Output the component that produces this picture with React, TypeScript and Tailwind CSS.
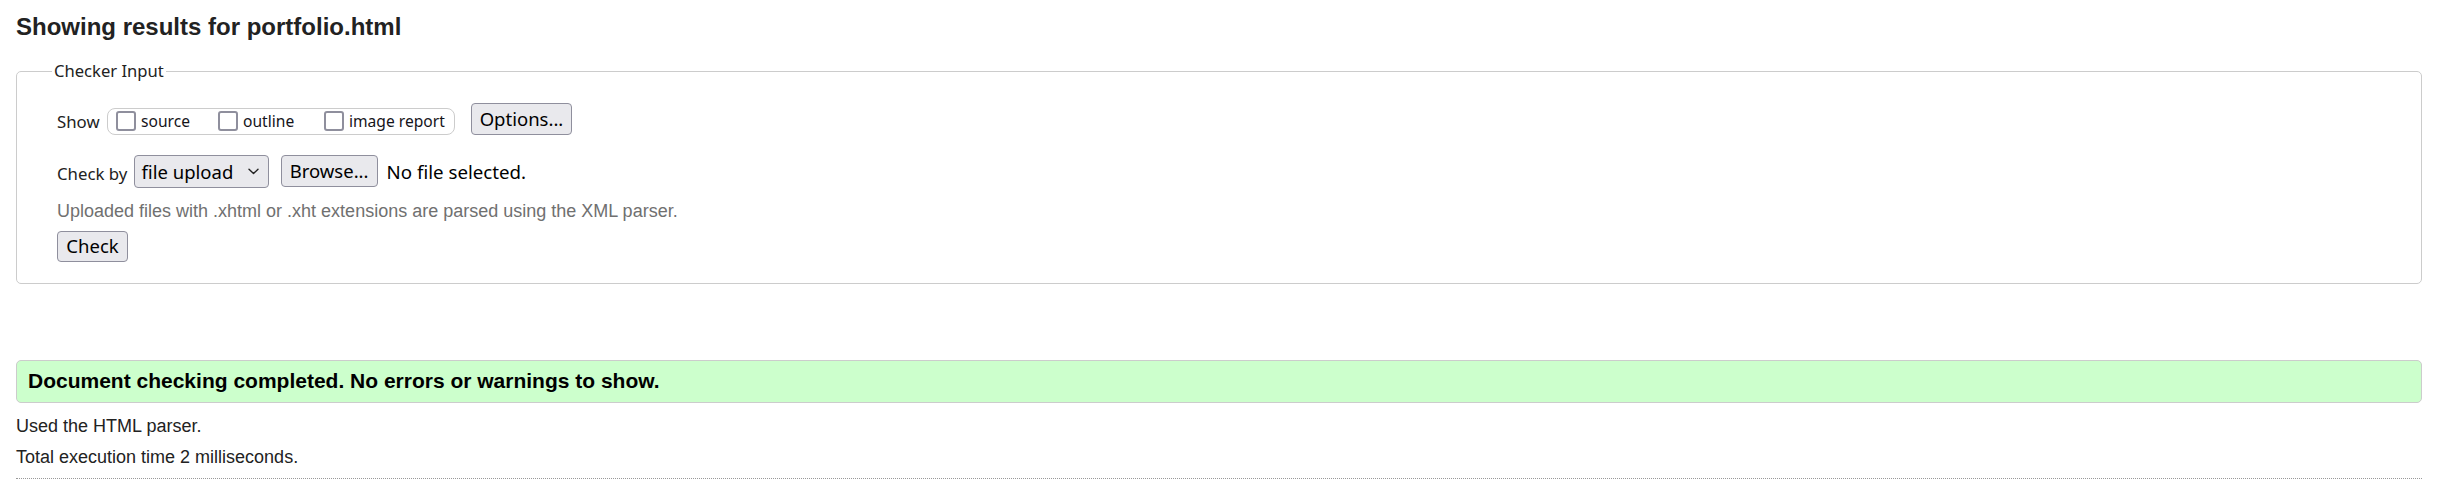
import React from "react";

function Box({ label, w }: { label: string; w: string }) {
  return (
    <label className="flex items-center gap-[5px]">
      <span className="block h-[20px] w-[20px] shrink-0 rounded-[3px] border-2 border-[#8f8f9d] bg-white" />
      <span className={`${w} whitespace-nowrap text-[15.6px] leading-[20px] text-[#15141a]`}>{label}</span>
    </label>
  );
}

export default function App() {
  return (
    <div className="min-h-[495px] bg-white pl-4 pr-8 font-['Liberation_Sans',Arial,sans-serif] text-[#222]">
      <h2 className="pt-[13px] text-[24px] font-bold leading-[28px] text-[#222]">
        Showing results for portfolio.html
      </h2>

      <fieldset className="mt-[18px] rounded-[5px] border border-[#cccccc] pb-[21px] pl-[40px] pt-[20px] font-['Noto_Sans',sans-serif]">
        <legend className="ml-[-5px] whitespace-nowrap px-[2px] text-[16.6px] leading-[24px] text-[#222]">
          Checker Input
        </legend>

        <div className="flex h-[33px] items-start">
          <span className="mt-[7px] w-[50px] shrink-0 text-[16.8px] leading-[24px] text-[#222]">Show</span>
          <div className="mt-[4.5px] flex h-[27px] w-[348px] shrink-0 items-center gap-[30px] rounded-[8px] border border-[#cccccc] pl-[8px]">
            <Box label="source" w="w-[47px]" />
            <Box label="outline" w="w-[51px]" />
            <Box label="image report" w="w-[95px]" />
          </div>
          <button className="ml-[16px] h-[32px] w-[101px] shrink-0 rounded-[4px] border border-[#8f8f9d] bg-[#e9e9ed] text-[18.5px] leading-[24px] text-black">
            Options...
          </button>
        </div>

        <div className="mt-[19px] flex h-[33px] items-start">
          <span className="mt-[7px] w-[76.6px] shrink-0 text-[16.8px] leading-[24px] text-[#222]">Check by</span>
          <div className="flex h-[33px] w-[135px] shrink-0 items-center justify-between rounded-[4px] border border-[#8f8f9d] bg-[#e9e9ed] pl-[7px] pr-[9px] text-[18.5px] leading-[24px] text-black">
            <span>file upload</span>
            <svg width="11" height="7" viewBox="0 0 11 7" fill="none">
              <path d="M1 1.2 L5.5 5.6 L10 1.2" stroke="#222" strokeWidth="1.4" strokeLinecap="round" strokeLinejoin="round" />
            </svg>
          </div>
          <button className="ml-[12px] h-[32px] w-[97px] shrink-0 rounded-[4px] border border-[#8f8f9d] bg-[#e9e9ed] text-[18.5px] leading-[24px] text-black">
            Browse...
          </button>
          <span className="ml-[9px] mt-[5px] whitespace-nowrap text-[18.7px] leading-[24px] text-black">No file selected.</span>
        </div>

        <p className="mt-[12.5px] font-['Liberation_Sans',Arial,sans-serif] text-[18px] leading-[20px] text-[#707070]">
          Uploaded files with .xhtml or .xht extensions are parsed using the XML parser.
        </p>

        <button className="mt-[10px] block h-[31px] w-[71px] rounded-[4px] border border-[#8f8f9d] bg-[#e9e9ed] text-[18.5px] leading-[24px] text-black">
          Check
        </button>
      </fieldset>

      <div className="mt-[76px] flex h-[43px] items-center rounded-[5px] border border-[#cccccc] bg-[#ccffcc] px-[11px]">
        <span className="text-[21px] font-bold leading-[24px] text-black">
          Document checking completed. No errors or warnings to show.
        </span>
      </div>

      <p className="mt-[13px] text-[18px] leading-[20px] text-[#222]">Used the HTML parser.</p>
      <p className="mt-[11px] text-[18px] leading-[20px] text-[#222]">Total execution time 2 milliseconds.</p>
      <div className="mt-[11px] border-t border-dotted border-[#999]" />
    </div>
  );
}
